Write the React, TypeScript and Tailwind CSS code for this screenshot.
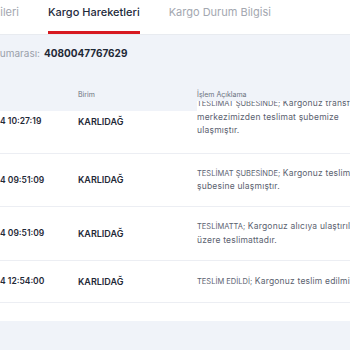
const rows = [
  {
    day: '12.03.202',
    date: '4 10:27:19',
    unit: 'KARLIDAĞ',
    lines: ['TESLİMAT ŞUBESİNDE;| Kargonuz transfer', 'merkezimizden teslimat şubemize', 'ulaşmıştır.'],
  },
  {
    day: '13.03.202',
    date: '4 09:51:09',
    unit: 'KARLIDAĞ',
    lines: ['TESLİMAT ŞUBESİNDE;| Kargonuz teslimat', 'şubesine ulaşmıştır.'],
  },
  {
    day: '13.03.202',
    date: '4 09:51:09',
    unit: 'KARLIDAĞ',
    lines: ['TESLİMATTA;| Kargonuz alıcıya ulaştırılmak', 'üzere teslimattadır.'],
  },
  {
    day: '13.03.202',
    date: '4 12:54:00',
    unit: 'KARLIDAĞ',
    lines: ['TESLİM EDİLDİ;| Kargonuz teslim edilmiştir.'],
  },
];

function DateCell({ day, value }: { day: string; value: string }) {
  return (
    <div className="w-[78px] shrink-0 flex whitespace-nowrap text-[8.5px] font-semibold text-[#1f2937]">
      <div className="w-0 flex justify-end">
        <span>{day}</span>
      </div>
      <span>{value}</span>
    </div>
  );
}

function Desc({ lines }: { lines: string[] }) {
  return (
    <div className="whitespace-nowrap text-[8.5px] tracking-[0.2px] leading-[13.5px] text-[#5b6270]">
      {lines.map((l) => {
        const [head, tail] = l.includes('|') ? l.split('|') : ['', l];
        return (
          <div key={l}>
            {head && <span className="text-[7.5px] tracking-normal">{head}</span>}
            {tail}
          </div>
        );
      })}
    </div>
  );
}

export default function App() {
  const [first, ...rest] = rows;
  const heights = ['h-[53px]', 'h-[54px]', 'h-[42px]'];

  return (
    <div className="w-[350px] h-[350px] overflow-hidden bg-[#f0f3f9]" style={{ fontFamily: 'Inter, sans-serif' }}>
      {/* tabs */}
      <div className="h-[35px] bg-white border-b border-[#e8ebf0] flex gap-[29px] text-[11px]">
        <div className="w-[19px] flex justify-end pt-[4px]">
          <span className="whitespace-nowrap text-[#a3a7b0]">Kargo Bilgileri</span>
        </div>
        <div className="flex flex-col justify-between pt-[4px]">
          <span className="font-medium text-[#1e2a3b]">Kargo Hareketleri</span>
          <div className="h-[3px] bg-[#d71920]" />
        </div>
        <div className="pt-[4px]">
          <span className="text-[#a3a7b0]">Kargo Durum Bilgisi</span>
        </div>
      </div>

      {/* tracking no */}
      <div className="flex items-center gap-[4px] mt-[11px] h-[14px]">
        <div className="w-[40px] flex justify-end">
          <span className="whitespace-nowrap text-[10px] text-[#9aa0aa]">Kargo Takip Numarası:</span>
        </div>
        <span className="text-[10px] font-bold text-[#1f2937]">4080047767629</span>
      </div>

      {/* table header */}
      <div className="mt-[10px] h-[41px] flex items-start pt-[20px] text-[7px] text-[#6b7280]">
        <div className="w-[78px] shrink-0" />
        <div className="w-[119px] shrink-0">Birim</div>
        <div>İşlem Açıklama</div>
      </div>

      {/* table body */}
      <div className="bg-white pb-[18px]">
        <div className="h-[43px] flex items-start border-b border-[#eceef3]">
          <div className="pt-[4px] flex">
            <DateCell day={first.day} value={first.date} />
            <div className="w-[119px] shrink-0 text-[9px] font-semibold text-[#1f2937]">{first.unit}</div>
          </div>
          <div className="-mt-[10px] bg-white overflow-hidden">
            <div className="-mt-[4px]">
              <Desc lines={first.lines} />
            </div>
          </div>
        </div>
        {rest.map((r, i) => (
          <div key={i} className={`${heights[i]} flex items-center border-b border-[#eceef3]`}>
            <DateCell day={r.day} value={r.date} />
            <div className="w-[119px] shrink-0 text-[9px] font-semibold text-[#1f2937]">{r.unit}</div>
            <Desc lines={r.lines} />
          </div>
        ))}
      </div>
    </div>
  );
}
